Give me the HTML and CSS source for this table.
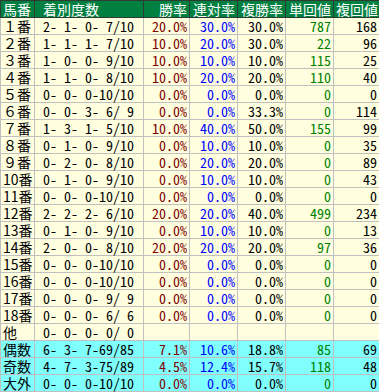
FILE: index.html
```html
<!DOCTYPE html>
<html lang="ja">
<head>
<meta charset="utf-8">
<link rel="stylesheet" href="styles.css">
</head>
<body>
<table class="stats">
<colgroup>
<col class="w-no"><col class="w-rec"><col class="w-rate"><col class="w-pct"><col class="w-pct"><col class="w-pct"><col class="w-last">
</colgroup>
<thead>
<tr><th class="l">馬番</th><th class="l rec">着別度数</th><th>勝率</th><th>連対率</th><th>複勝率</th><th>単回値</th><th>複回値</th></tr>
</thead>
<tbody>
<tr><td>１番</td><td class="rec">2- 1- 0- 7/10</td><td class="win">20.0%</td><td class="ren">30.0%</td><td class="fuku">30.0%</td><td class="tan">787</td><td class="fk">168</td></tr>
<tr><td>２番</td><td class="rec">1- 1- 1- 7/10</td><td class="win">10.0%</td><td class="ren">20.0%</td><td class="fuku">30.0%</td><td class="tan">22</td><td class="fk">96</td></tr>
<tr><td>３番</td><td class="rec">1- 0- 0- 9/10</td><td class="win">10.0%</td><td class="ren">10.0%</td><td class="fuku">10.0%</td><td class="tan">115</td><td class="fk">25</td></tr>
<tr><td>４番</td><td class="rec">1- 1- 0- 8/10</td><td class="win">10.0%</td><td class="ren">20.0%</td><td class="fuku">20.0%</td><td class="tan">110</td><td class="fk">40</td></tr>
<tr><td>５番</td><td class="rec">0- 0- 0-10/10</td><td class="win">0.0%</td><td class="ren">0.0%</td><td class="fuku">0.0%</td><td class="tan">0</td><td class="fk">0</td></tr>
<tr><td>６番</td><td class="rec">0- 0- 3- 6/ 9</td><td class="win">0.0%</td><td class="ren">0.0%</td><td class="fuku">33.3%</td><td class="tan">0</td><td class="fk">114</td></tr>
<tr><td>７番</td><td class="rec">1- 3- 1- 5/10</td><td class="win">10.0%</td><td class="ren">40.0%</td><td class="fuku">50.0%</td><td class="tan">155</td><td class="fk">99</td></tr>
<tr><td>８番</td><td class="rec">0- 1- 0- 9/10</td><td class="win">0.0%</td><td class="ren">10.0%</td><td class="fuku">10.0%</td><td class="tan">0</td><td class="fk">35</td></tr>
<tr><td>９番</td><td class="rec">0- 2- 0- 8/10</td><td class="win">0.0%</td><td class="ren">20.0%</td><td class="fuku">20.0%</td><td class="tan">0</td><td class="fk">89</td></tr>
<tr><td>10番</td><td class="rec">0- 1- 0- 9/10</td><td class="win">0.0%</td><td class="ren">10.0%</td><td class="fuku">10.0%</td><td class="tan">0</td><td class="fk">43</td></tr>
<tr><td>11番</td><td class="rec">0- 0- 0-10/10</td><td class="win">0.0%</td><td class="ren">0.0%</td><td class="fuku">0.0%</td><td class="tan">0</td><td class="fk">0</td></tr>
<tr><td>12番</td><td class="rec">2- 2- 2- 6/10</td><td class="win">20.0%</td><td class="ren">20.0%</td><td class="fuku">40.0%</td><td class="tan">499</td><td class="fk">234</td></tr>
<tr><td>13番</td><td class="rec">0- 1- 0- 9/10</td><td class="win">0.0%</td><td class="ren">10.0%</td><td class="fuku">10.0%</td><td class="tan">0</td><td class="fk">13</td></tr>
<tr><td>14番</td><td class="rec">2- 0- 0- 8/10</td><td class="win">20.0%</td><td class="ren">20.0%</td><td class="fuku">20.0%</td><td class="tan">97</td><td class="fk">36</td></tr>
<tr><td>15番</td><td class="rec">0- 0- 0-10/10</td><td class="win">0.0%</td><td class="ren">0.0%</td><td class="fuku">0.0%</td><td class="tan">0</td><td class="fk">0</td></tr>
<tr><td>16番</td><td class="rec">0- 0- 0-10/10</td><td class="win">0.0%</td><td class="ren">0.0%</td><td class="fuku">0.0%</td><td class="tan">0</td><td class="fk">0</td></tr>
<tr><td>17番</td><td class="rec">0- 0- 0- 9/ 9</td><td class="win">0.0%</td><td class="ren">0.0%</td><td class="fuku">0.0%</td><td class="tan">0</td><td class="fk">0</td></tr>
<tr><td>18番</td><td class="rec">0- 0- 0- 6/ 6</td><td class="win">0.0%</td><td class="ren">0.0%</td><td class="fuku">0.0%</td><td class="tan">0</td><td class="fk">0</td></tr>
<tr><td>他</td><td class="rec">0- 0- 0- 0/ 0</td><td class="win"></td><td class="ren"></td><td class="fuku"></td><td class="tan"></td><td class="fk"></td></tr>
<tr class="sum"><td>偶数</td><td class="rec">6- 3- 7-69/85</td><td class="win">7.1%</td><td class="ren">10.6%</td><td class="fuku">18.8%</td><td class="tan">85</td><td class="fk">69</td></tr>
<tr class="sum"><td>奇数</td><td class="rec">4- 7- 3-75/89</td><td class="win">4.5%</td><td class="ren">12.4%</td><td class="fuku">15.7%</td><td class="tan">118</td><td class="fk">48</td></tr>
<tr class="sum"><td>大外</td><td class="rec">0- 0- 0-10/10</td><td class="win">0.0%</td><td class="ren">0.0%</td><td class="fuku">0.0%</td><td class="tan">0</td><td class="fk">0</td></tr>
</tbody>
</table>
</body>
</html>
```
FILE: styles.css
```css
html, body {
  margin: 0;
  padding: 0;
  background: #ffffff;
}
.stats {
  border-collapse: collapse;
  table-layout: fixed;
  width: 379px;
  font-family: "Noto Sans CJK JP", sans-serif;
  font-feature-settings: "hwid" 1;
  font-size: 14px;
  line-height: 16px;
  color: #000000;
}
.w-no { width: 34px; }
.w-rec { width: 109px; }
.w-rate { width: 46px; }
.w-pct { width: 48px; }
.w-last { width: 46px; }
.stats th,
.stats td {
  height: 16px;
  padding: 0 2px;
  border: 1px solid #c0c0c0;
  white-space: pre;
  text-align: right;
  vertical-align: middle;
  font-weight: normal;
  box-sizing: content-box;
}
.stats th {
  background: #008040;
  color: #ffffff;
  border-color: #2e3b33;
}
.stats th.l,
.stats td:first-child {
  text-align: left;
}
.stats td:first-child {
  font-feature-settings: normal;
}
.stats .rec {
  text-align: left;
  padding-left: 8px;
}
.stats tbody td {
  background: #ffffe0;
}
.stats tbody tr.sum td {
  background: #80ffff;
}
.win { color: #800000; }
.ren { color: #0000ff; }
.fuku { color: #000000; }
.tan { color: #008000; }
.fk { color: #000000; }
```
